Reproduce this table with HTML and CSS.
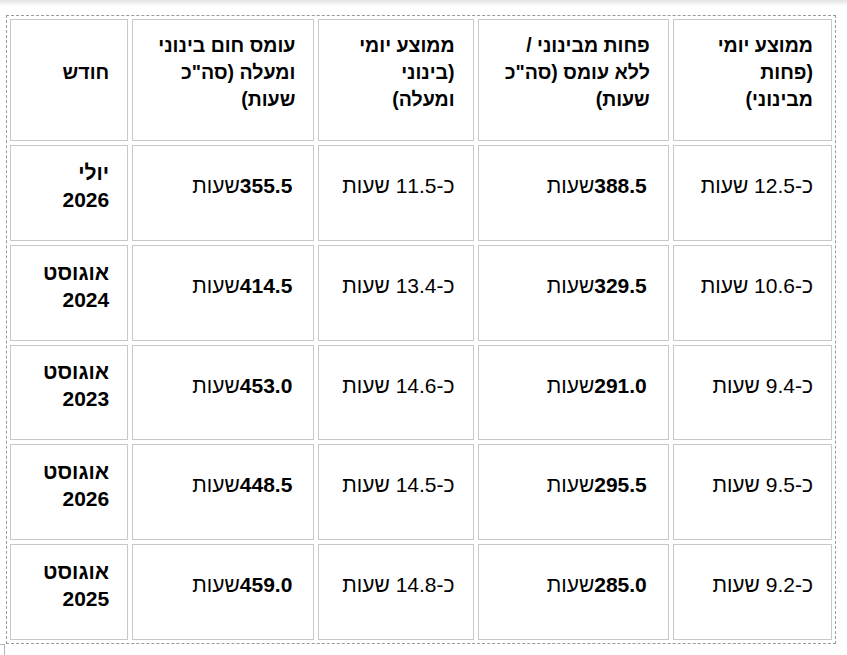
FILE: index.html
```html
<!DOCTYPE html>
<html lang="he">
<head>
<meta charset="utf-8">
<title>עומס חום</title>
<link rel="stylesheet" href="styles.css">
</head>
<body>
<div class="topshade"></div>
<main class="page">
  <div class="frame">
    <table class="heat" dir="rtl">
      <thead>
        <tr>
          <th class="c-a">ממוצע יומי (פחות מבינוני)</th>
          <th class="c-b">פחות מבינוני / ללא עומס (סה"כ שעות)</th>
          <th class="c-c">ממוצע יומי (בינוני ומעלה)</th>
          <th class="c-d">עומס חום בינוני ומעלה (סה"כ שעות)</th>
          <th class="c-e">חודש</th>
        </tr>
      </thead>
      <tbody>
        <tr>
          <td>כ-12.5 שעות</td>
          <td class="num"><b>388.5</b>שעות</td>
          <td>כ-11.5 שעות</td>
          <td class="num"><b>355.5</b>שעות</td>
          <td class="month">יולי 2026</td>
        </tr>
        <tr>
          <td>כ-10.6 שעות</td>
          <td class="num"><b>329.5</b>שעות</td>
          <td>כ-13.4 שעות</td>
          <td class="num"><b>414.5</b>שעות</td>
          <td class="month">אוגוסט 2024</td>
        </tr>
        <tr class="short">
          <td>כ-9.4 שעות</td>
          <td class="num"><b>291.0</b>שעות</td>
          <td>כ-14.6 שעות</td>
          <td class="num"><b>453.0</b>שעות</td>
          <td class="month">אוגוסט 2023</td>
        </tr>
        <tr>
          <td>כ-9.5 שעות</td>
          <td class="num"><b>295.5</b>שעות</td>
          <td>כ-14.5 שעות</td>
          <td class="num"><b>448.5</b>שעות</td>
          <td class="month">אוגוסט 2026</td>
        </tr>
        <tr>
          <td>כ-9.2 שעות</td>
          <td class="num"><b>285.0</b>שעות</td>
          <td>כ-14.8 שעות</td>
          <td class="num"><b>459.0</b>שעות</td>
          <td class="month">אוגוסט 2025</td>
        </tr>
      </tbody>
    </table>
  </div>
  <div class="corner"></div>
</main>
</body>
</html>
```

FILE: styles.css
```css
html, body {
  margin: 0;
  padding: 0;
  background: #fff;
}

body {
  font-family: "Liberation Sans", Arial, sans-serif;
  color: #000;
  overflow: hidden;
}

.topshade {
  height: 6px;
  background: linear-gradient(#e2e2e2, #ffffff);
}

.page {
  padding: 9px 0 0 6px;
}

.frame {
  width: 830px;
  box-sizing: border-box;
  border: 1px dashed #9a9a9a;
}

.heat {
  width: 830px;
  margin: -1px;
  border-collapse: separate;
  border-spacing: 4px;
  table-layout: fixed;
  font-size: 21px;
  line-height: 27px;
}

.heat th,
.heat td {
  box-sizing: border-box;
  border: 1px solid #c8c8c8;
  padding: 12px 18px 27px;
  text-align: right;
  vertical-align: middle;
}

.heat th {
  font-size: 19.5px;
  font-weight: bold;
  height: 122px;
}

.heat td {
  font-weight: normal;
  height: 96px;
}

.heat td.num {
  padding-right: 21px;
}

.heat tr.short td {
  height: 95px;
}

.heat td.month {
  font-weight: bold;
}

.c-a { width: 159px; }
.c-b { width: 191px; }
.c-c { width: 155px; }
.c-d { width: 182px; }
.c-e { width: 118px; }

.corner {
  width: 4px;
  height: 10px;
  margin-left: -6px;
  border-top: 1px solid #b8b8b8;
  border-right: 1px solid #b8b8b8;
}
```
